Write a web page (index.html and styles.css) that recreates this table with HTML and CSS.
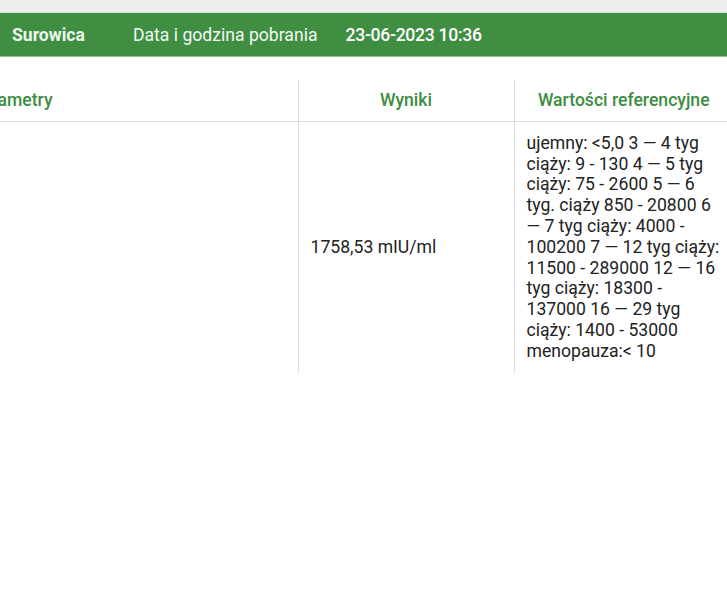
FILE: index.html
```html
<!DOCTYPE html>
<html lang="pl">
<head>
<meta charset="utf-8">
<title>Wyniki</title>
<link rel="stylesheet" href="styles.css">
</head>
<body>
<div class="topstrip"></div>
<div class="bar">
  <span class="material">Surowica</span>
  <span class="label">Data i godzina pobrania</span>
  <span class="date">23-06-2023 10:36</span>
</div>
<div class="scroller">
  <table class="results">
    <thead>
      <tr>
        <th class="c-param">Parametry</th>
        <th class="c-result">Wyniki</th>
        <th class="c-ref">Wartości referencyjne</th>
      </tr>
    </thead>
    <tbody>
      <tr>
        <td class="c-param"></td>
        <td class="c-result">1758,53 mIU/ml</td>
        <td class="c-ref">ujemny: &lt;5,0 3 — 4 tyg ciąży: 9 - 130 4 — 5 tyg ciąży: 75 - 2600 5 — 6 tyg. ciąży 850 - 20800 6 — 7 tyg ciąży: 4000 - 100200 7 — 12 tyg ciąży: 11500 - 289000 12 — 16 tyg ciąży: 18300 - 137000 16 — 29 tyg ciąży: 1400 - 53000 menopauza:&lt; 10</td>
      </tr>
    </tbody>
  </table>
</div>
</body>
</html>
```
FILE: styles.css
```css
html, body {
  margin: 0;
  padding: 0;
  background: #ffffff;
  font-family: Roboto, "Liberation Sans", sans-serif;
  overflow: hidden;
}

.topstrip {
  height: 12px;
  background: #eeeeee;
  border-bottom: 1px solid #cfe3cf;
}

.bar {
  display: flex;
  align-items: center;
  height: 44px;
  background: #3f8e42;
  padding: 0 12px;
  color: #ffffff;
  font-size: 17.6px;
  border-bottom: 1px solid #8fbf90;
  box-sizing: border-box;
}

.material {
  font-weight: 700;
  color: #eaf6ea;
  width: 121px;
}

.label {
  font-weight: 400;
  color: #f3f8f3;
  margin-right: 28px;
}

.date {
  font-weight: 500;
  letter-spacing: -0.3px;
}

.scroller {
  overflow: hidden;
  margin-top: 23px;
}

.results {
  border-collapse: collapse;
  margin-left: -41px;
  font-size: 17.6px;
  line-height: 20.8px;
  color: #222222;
  table-layout: fixed;
  width: 774px;
}

.results th,
.results td {
  box-sizing: border-box;
  padding: 11px 12px;
  vertical-align: middle;
}

.results th {
  padding-top: 10px;
  padding-bottom: 10px;
  color: #3d8c40;
  font-weight: 500;
  border-bottom: 1px solid #dddddd;
}

.c-param {
  width: 339px;
  text-align: left;
}

.c-result {
  width: 216px;
  border-left: 1px solid #dddddd;
}

th.c-result,
th.c-ref {
  text-align: center;
}

.c-ref {
  width: 219px;
  border-left: 1px solid #dddddd;
}

td.c-result,
td.c-ref {
  text-align: left;
}
```
